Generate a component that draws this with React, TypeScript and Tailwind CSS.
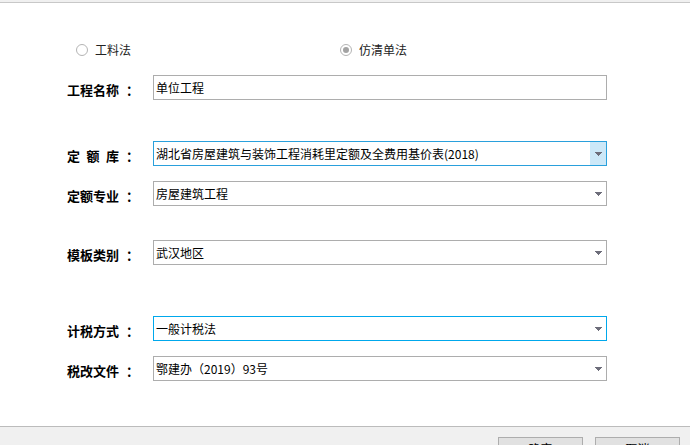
import React from 'react';

const font = { fontFamily: '"Noto Sans CJK SC", "Noto Sans", sans-serif' };

const Arrow = () => (
  <svg width="7" height="4" viewBox="0 0 7 4">
    <path d="M0 0.5h7M1 1.5h5M2 2.5h3M3 3.5h1" stroke="#6d6d7a" strokeWidth="1" />
  </svg>
);

type FieldProps = {
  label: React.ReactNode;
  value: string;
  mt: string;
  kind?: 'text' | 'select' | 'select-active' | 'select-focus';
};

const Field: React.FC<FieldProps> = ({ label, value, mt, kind = 'select' }) => {
  const border =
    kind === 'select-active'
      ? 'border-[#2aa0dc]'
      : kind === 'select-focus'
      ? 'border-[#00a8ec]'
      : 'border-[#adadad]';
  return (
    <div className={`flex items-center pl-[67px] ${mt}`}>
      <div className="flex w-[86px] items-center text-[13px] font-bold text-black leading-none pt-[3px]">
        <div className="w-[52px]">{label}</div>
        <span className="ml-[7px]">：</span>
      </div>
      <div className={`flex h-[25px] w-[454px] items-stretch border bg-white ${border}`}>
        <div className="flex flex-1 items-center pl-[2px] text-[12px] text-black whitespace-nowrap overflow-hidden">
          {value}
        </div>
        {kind !== 'text' && (
          <div
            className={`flex w-[16px] items-center justify-center ${
              kind === 'select-active' ? 'bg-[#cce8f8]' : ''
            }`}
          >
            <Arrow />
          </div>
        )}
      </div>
    </div>
  );
};

const Radio: React.FC<{ checked?: boolean; label: string; w: string }> = ({ checked, label, w }) => (
  <div className={`flex items-center ${w}`}>
    <div className="flex h-[12px] w-[12px] items-center justify-center rounded-full border border-[#b4b4b4] bg-white">
      {checked && <div className="h-[6px] w-[6px] rounded-full bg-[#a3a3a3]" />}
    </div>
    <span className="ml-[7px] text-[12px] text-[#222]">{label}</span>
  </div>
);

export default function App() {
  return (
    <div className="flex h-[445px] w-[690px] flex-col overflow-hidden bg-white" style={font}>
      <div className="h-[3px] shrink-0 border-b border-[#c8c8c8] bg-[#f0f0f0]" />
      <div className="h-[423px] shrink-0">
        <div className="mt-[39px] flex h-[16px] items-center pl-[76px]">
          <Radio label="工料法" w="w-[264px]" />
          <Radio label="仿清单法" checked w="" />
        </div>
        <Field label="工程名称" value="单位工程" mt="mt-[17px]" kind="text" />
        <Field
          label={
            <div className="flex justify-between">
              <span>定</span>
              <span>额</span>
              <span>库</span>
            </div>
          }
          value="湖北省房屋建筑与装饰工程消耗里定额及全费用基价表(2018)"
          mt="mt-[41px]"
          kind="select-active"
        />
        <Field label="定额专业" value="房屋建筑工程" mt="mt-[15px]" />
        <Field label="模板类别" value="武汉地区" mt="mt-[34px]" />
        <Field label="计税方式" value="一般计税法" mt="mt-[51px]" kind="select-focus" />
        <Field label="税改文件" value="鄂建办（2019）93号" mt="mt-[15px]" />
      </div>
      <div className="flex shrink-0 justify-end gap-[12px] border-t border-[#bcbcbc] bg-[#f0f0f0] pr-[10px] pt-[10px] h-[40px]">
        <button className="flex h-[23px] w-[85px] shrink-0 items-start justify-center border border-[#adadad] bg-[#e1e1e1] pt-[4px] text-[12px] leading-[14px] text-black">
          确定
        </button>
        <button className="flex h-[23px] w-[85px] shrink-0 items-start justify-center border border-[#adadad] bg-[#e1e1e1] pt-[4px] text-[12px] leading-[14px] text-black">
          取消
        </button>
      </div>
    </div>
  );
}
